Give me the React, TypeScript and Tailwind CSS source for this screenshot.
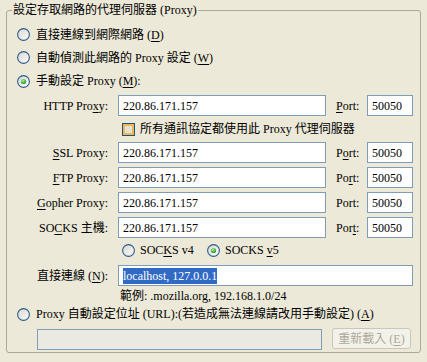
import React from "react";

const FONT = "font-['Liberation_Serif','Noto_Sans_CJK_TC',serif]";

function U({ children }: { children: React.ReactNode }) {
  return <span className="underline decoration-1 underline-offset-[2px]">{children}</span>;
}

function Radio({ checked }: { checked?: boolean }) {
  return (
    <svg width="13" height="13" viewBox="0 0 13 13" className="shrink-0 block">
      <defs>
        <linearGradient id="rg" x1="0" y1="0" x2="1" y2="1">
          <stop offset="0" stopColor="#d6d4ca" />
          <stop offset="1" stopColor="#ffffff" />
        </linearGradient>
        <radialGradient id="dg" cx="0.4" cy="0.35" r="0.65">
          <stop offset="0" stopColor="#a8f0a0" />
          <stop offset="1" stopColor="#1f9a1f" />
        </radialGradient>
      </defs>
      <circle cx="6.5" cy="6.5" r="5.9" fill="url(#rg)" stroke="#2c5b8c" strokeWidth="1.1" />
      {checked && <circle cx="6.5" cy="6.5" r="2.6" fill="url(#dg)" />}
    </svg>
  );
}

function Checkbox() {
  return (
    <div className="w-[13px] h-[13px] shrink-0 border border-[#1c5180] bg-[#f2b850] p-[2px]">
      <div className="w-full h-full bg-[#e2e1da]" />
    </div>
  );
}

function ProxyRow({ label, port }: { label: React.ReactNode; port: React.ReactNode }) {
  return (
    <div className="flex items-center h-[25px]">
      <div className="w-[101px] text-right whitespace-nowrap">{label}</div>
      <div className="ml-[10px] w-[208px] h-[21px] border border-[#7f9db9] bg-white pl-[4px] flex items-center">
        220.86.171.157
      </div>
      <div className="w-[41px] pl-[10px] whitespace-nowrap">{port}</div>
      <div className="w-[46px] h-[21px] border border-[#7f9db9] bg-white pl-[4px] flex items-center">
        50050
      </div>
    </div>
  );
}

export default function App() {
  return (
    <div className={`w-[427px] h-[362px] bg-[#ece9d8] pl-[6px] ${FONT} text-[12px] leading-[14px] text-black`}>
      <fieldset className="m-0 w-[415px] border border-[#aca899] rounded-[3px] px-0 pt-0 pb-[2px]">
        <legend className="ml-[5px] px-[1px] h-[20px] leading-[20px] whitespace-nowrap">
          設定存取網路的代理伺服器 (Proxy)
        </legend>
        <div className="pt-[3px]">
          <div className="flex items-center h-[23px] pl-[10px] gap-[6px]">
            <Radio />
            <span className="whitespace-nowrap">
              直接連線到網際網路 (<U>D</U>)
            </span>
          </div>
          <div className="flex items-center h-[23px] pl-[10px] gap-[6px]">
            <Radio />
            <span className="whitespace-nowrap">
              自動偵測此網路的 Proxy 設定 (<U>W</U>)
            </span>
          </div>
          <div className="flex items-center h-[24px] pl-[10px] gap-[6px]">
            <Radio checked />
            <span className="whitespace-nowrap">
              手動設定 Proxy (<U>M</U>):
            </span>
          </div>

          <ProxyRow
            label={<>HTTP Pro<U>x</U>y:</>}
            port={<><U>P</U>ort:</>}
          />

          <div className="flex items-center h-[22px] pl-[115px] gap-[5px]">
            <Checkbox />
            <span className="whitespace-nowrap">所有通訊協定都使用此 Proxy 代理伺服器</span>
          </div>

          <ProxyRow
            label={<><U>S</U>SL Proxy:</>}
            port={<>P<U>o</U>rt:</>}
          />
          <ProxyRow
            label={<><U>F</U>TP Proxy:</>}
            port={<>Po<U>r</U>t:</>}
          />
          <ProxyRow
            label={<><U>G</U>opher Proxy:</>}
            port={<>Port:</>}
          />
          <ProxyRow
            label={<>SO<U>C</U>KS 主機:</>}
            port={<>Por<U>t</U>:</>}
          />

          <div className="flex items-center h-[20px] pl-[115px]">
            <div className="w-[85px] flex items-center gap-[5px]">
              <Radio />
              <span className="whitespace-nowrap">
                SOC<U>K</U>S v4
              </span>
            </div>
            <div className="flex items-center gap-[5px]">
              <Radio checked />
              <span className="whitespace-nowrap">
                SOCKS <U>v</U>5
              </span>
            </div>
          </div>

          <div className="flex items-center h-[21px] mt-[5px]">
            <div className="w-[101px] text-right whitespace-nowrap">
              直接連線 (<U>N</U>):
            </div>
            <div className="ml-[10px] w-[295px] h-[21px] border border-[#7f9db9] bg-white pl-[4px] flex items-center">
              <span className="bg-[#316ac5] text-white h-[16px] leading-[16px] inline-block">
                localhost, 127.0.0.1
              </span>
            </div>
          </div>

          <div className="flex items-center h-[20px] pl-[113px] whitespace-nowrap">
            範例: .mozilla.org, 192.168.1.0/24
          </div>

          <div className="flex items-center h-[16px] pl-[10px] gap-[6px]">
            <Radio />
            <span className="whitespace-nowrap">
              Proxy 自動設定位址 (URL):(若造成無法連線請改用手動設定) (<U>A</U>)
            </span>
          </div>

          <div className="flex h-[22px] mt-[6px] pl-[30px]">
            <div className="self-end w-[285px] h-[21px] border border-[#7f9db9] bg-[#ebeae2]" />
            <div className="self-start ml-[10px] w-[79px] h-[21px] border border-[#c9c7ba] rounded-[3px] bg-[#f3f2ea] text-[#aca899] flex items-center justify-center whitespace-nowrap">
              重新載入 (<U>E</U>)
            </div>
          </div>
        </div>
      </fieldset>
    </div>
  );
}
